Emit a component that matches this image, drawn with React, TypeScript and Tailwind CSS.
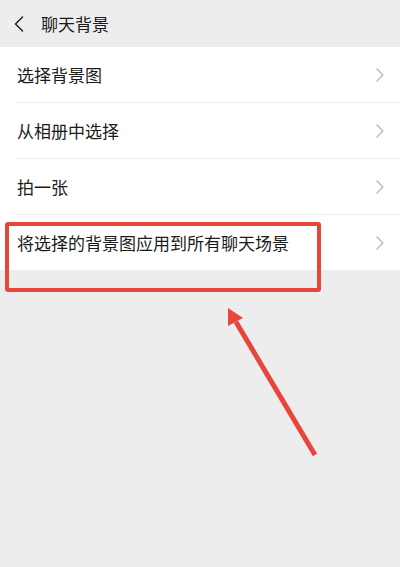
import { ChevronLeft, ChevronRight } from "lucide-react";

const items = ["选择背景图", "从相册中选择", "拍一张", "将选择的背景图应用到所有聊天场景"];

export default function App() {
    return (
        <div
            className="relative w-[400px] h-[567px] overflow-hidden bg-[#ededed] text-[#1b1b1b]"
            style={{ fontFamily: '"Noto Sans CJK SC", "Noto Sans", sans-serif' }}
        >
            {/* header */}
            <div className="h-[47px] flex items-center pl-[5px] bg-[#ededed]">
                <ChevronLeft className="w-[28px] h-[28px] text-[#222]" strokeWidth={1.3} />
                <span className="ml-[8px] text-[17px] font-normal">聊天背景</span>
            </div>

            <div className="bg-white">
                {items.map((label, i) => (
                    <div key={label}>
                        {i > 0 && <div className="ml-[16px] h-px bg-[#ececec]" />}
                        <div className="h-[55px] flex items-center justify-between pl-[17px] pr-[8px]">
                            <span className="text-[17px] leading-none">{label}</span>
                            <ChevronRight className="w-[24px] h-[24px] text-[#b4b4b4]" strokeWidth={1.2} />
                        </div>
                    </div>
                ))}
            </div>

            {/* red annotation box */}
            <div className="absolute left-[5px] top-[222px] w-[316px] h-[70px] border-[4px] border-[#e8453b] rounded-[3px]" />

            {/* red arrow */}
            <svg className="absolute left-0 top-0" width="400" height="567" viewBox="0 0 400 567">
                <line x1="315" y1="455" x2="236" y2="322" stroke="#e8453b" strokeWidth="5" />
                <polygon points="228,308 243,318 228,326" fill="#e8453b" />
            </svg>
        </div>
    );
}
